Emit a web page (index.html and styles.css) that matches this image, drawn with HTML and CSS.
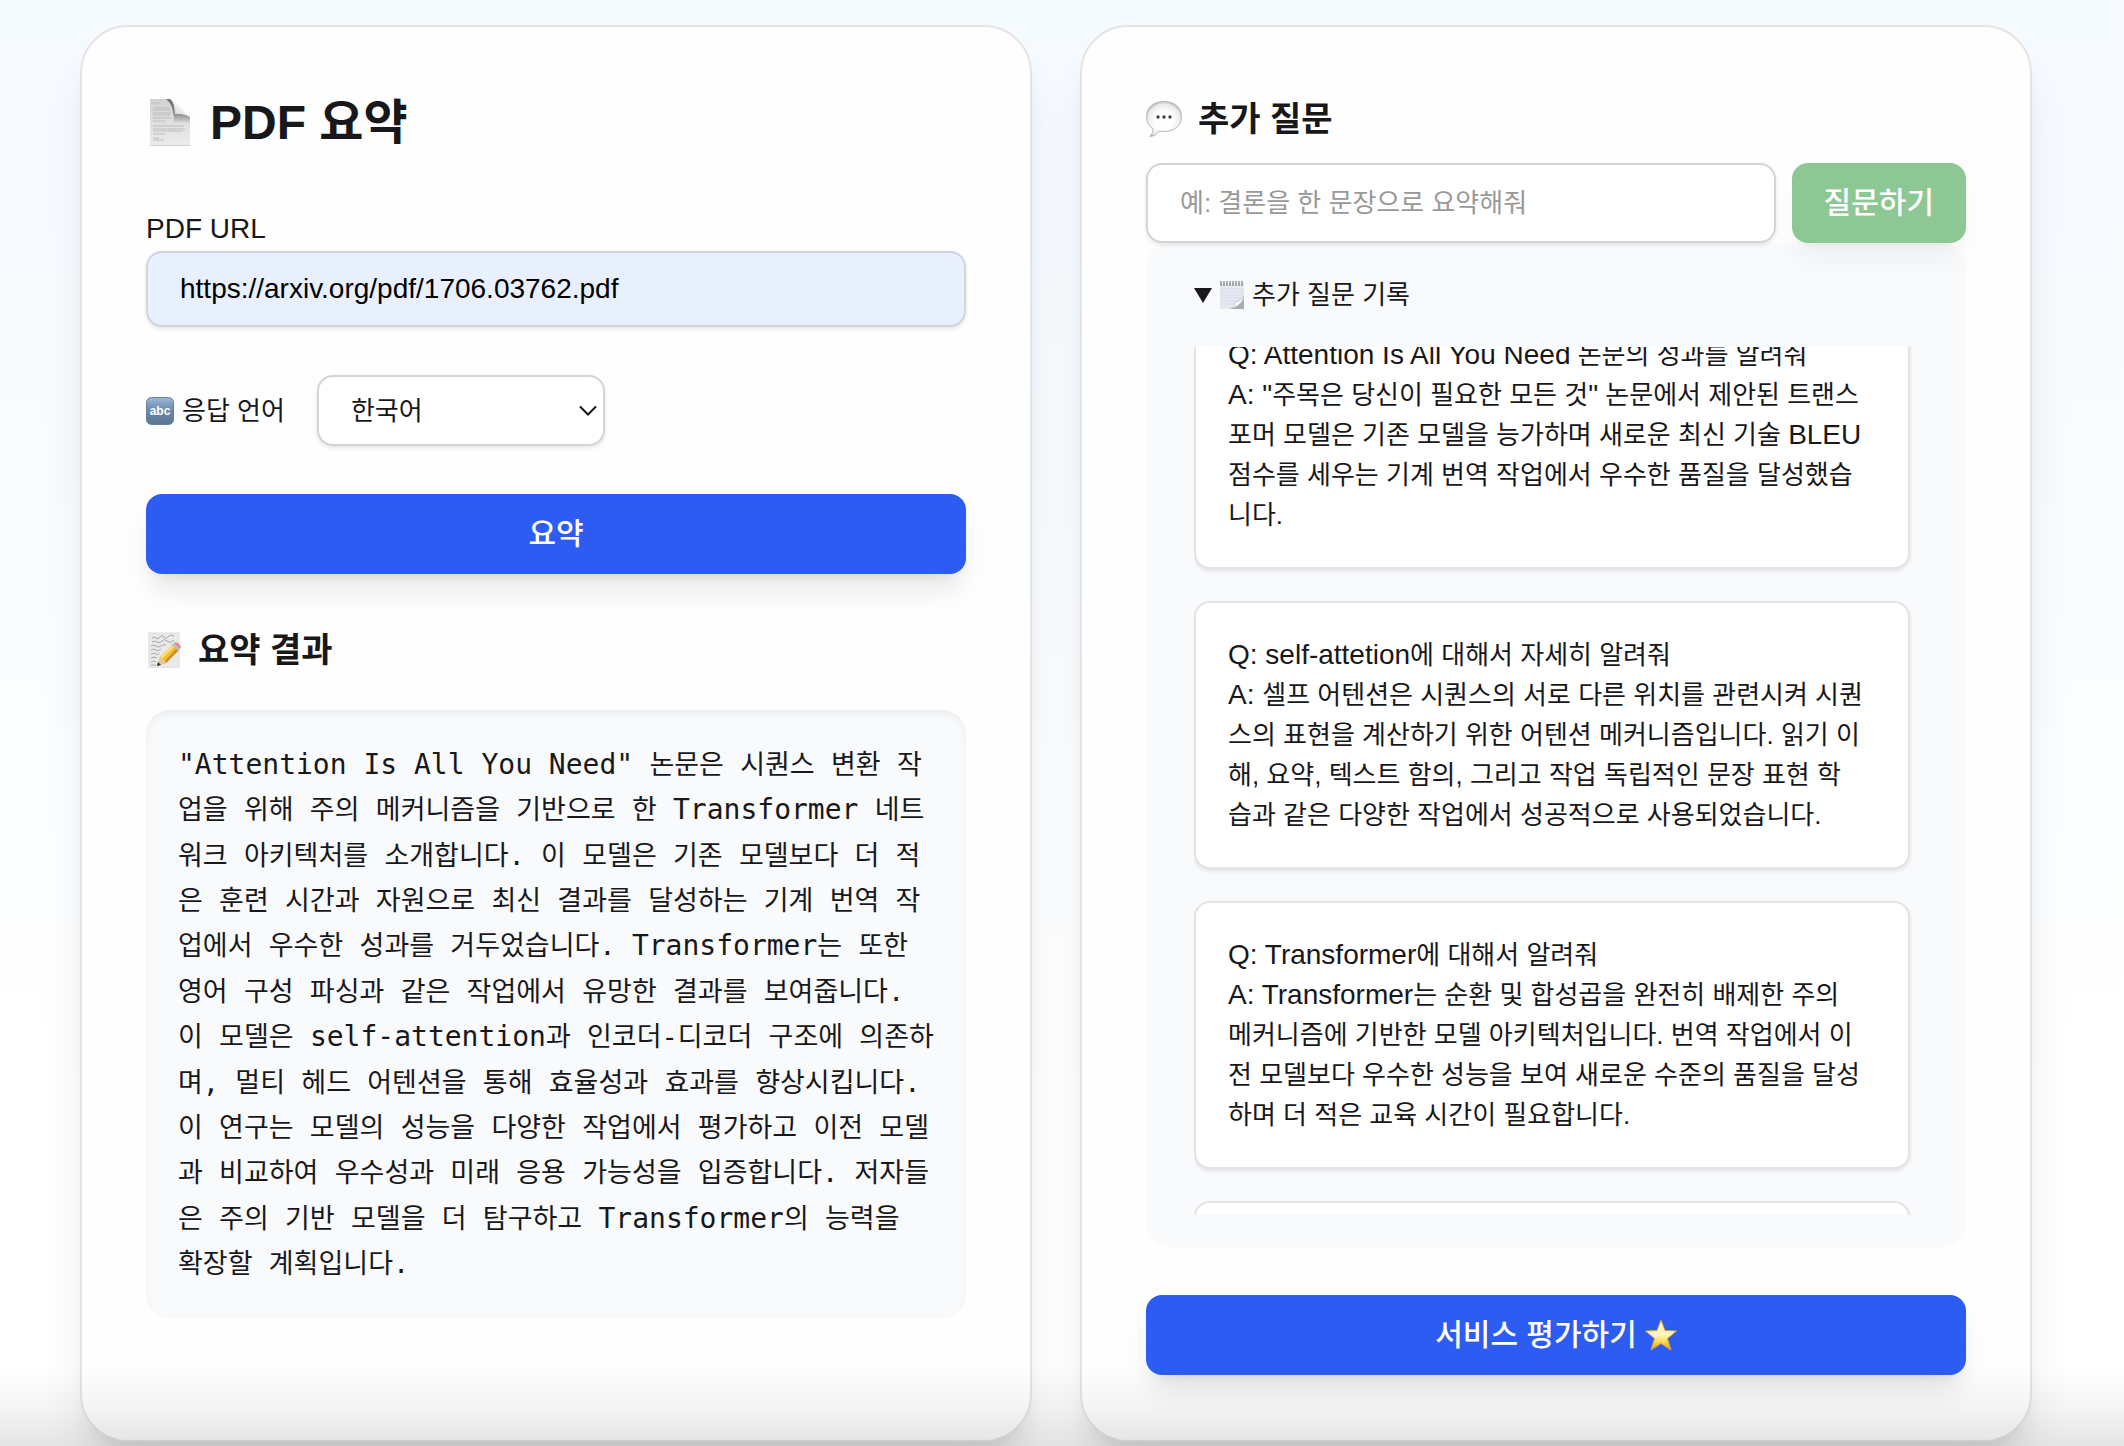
FILE: index.html
```html
<!DOCTYPE html>
<html lang="ko">
<head>
<meta charset="utf-8">
<meta name="viewport" content="width=device-width, initial-scale=1">
<title>PDF 요약</title>
<link rel="stylesheet" href="styles.css">
</head>
<body>
<main class="page">
  <section class="card">
    <h1 class="title">
      <svg class="icon-xl" viewBox="0 0 48 48" aria-hidden="true">
        <defs>
          <linearGradient id="paper" x1="0" y1="0" x2="0" y2="1"><stop offset="0" stop-color="#d2d2d2"/><stop offset="1" stop-color="#ececec"/></linearGradient>
          <linearGradient id="fold" x1="0" y1="1" x2="1" y2="0"><stop offset="0" stop-color="#c4c4c4"/><stop offset=".6" stop-color="#fafafa"/><stop offset="1" stop-color="#dcdcdc"/></linearGradient>
          <linearGradient id="foldShade" x1="0" y1="0" x2="0" y2="1"><stop offset="0" stop-color="#6f6f6f"/><stop offset=".6" stop-color="#8a8a8a"/><stop offset="1" stop-color="#d8d8d8"/></linearGradient>
        </defs>
        <path d="M4 0H24Q29 2 29 14L44 17V47H4Z" fill="url(#paper)"/>
        <path d="M7 4h7M7 9h17M7 11h18M7 14h19M7 16h17M7 19h18M7 22h12M7 27h31M7 30h32M7 32h30M7 35h12M7 39h6M7 41h11" stroke="#bdbdbd" stroke-width="1"/>
        <path d="M20 0H24Q29 2 29 15Q38 14 44 18V24Q35 22 28 24Q28 6 20 0Z" fill="url(#foldShade)"/>
        <path d="M24 0Q32 4 44 18Q38 14 29 15Q29 3 24 0Z" fill="url(#fold)"/>
        <path d="M4 46.500H44" stroke="#d0d0d0"/>
      </svg>
      PDF 요약
    </h1>

    <label class="field-label" for="pdf-url">PDF URL</label>
    <input class="input input-filled" id="pdf-url" type="text" value="https://arxiv.org/pdf/1706.03762.pdf">

    <div class="lang-row">
      <label class="lang-label" for="language">
        <svg class="icon-sm" viewBox="0 0 28 28" aria-hidden="true">
          <defs><linearGradient id="abc" x1="0" y1="0" x2="0" y2="1"><stop offset="0" stop-color="#9db9d6"/><stop offset=".45" stop-color="#6a8cb0"/><stop offset="1" stop-color="#5d7590"/></linearGradient></defs>
          <rect x=".5" y=".5" width="27" height="27" rx="5" fill="url(#abc)" stroke="#66809c"/>
          <text x="14" y="18" class="abc-text">abc</text>
        </svg>
        응답 언어
      </label>
      <span class="select-wrap">
        <select class="select" id="language">
          <option selected>한국어</option>
        </select>
        <svg class="chevron" viewBox="0 0 18 12" aria-hidden="true"><path d="M1 1.500L9 9.500L17 1.500" fill="none" stroke="#18181b" stroke-width="2"/></svg>
      </span>
    </div>

    <button class="button button-primary" type="button">요약</button>

    <h2 class="subtitle subtitle-result">
      <svg class="icon-lg" viewBox="0 0 36 36" aria-hidden="true">
        <rect x="3" y="1" width="30" height="35" fill="#e9e9e9" stroke="#dcdcdc"/>
        <path d="M6 6q2-2 4 0t4-1t4 0t4 0t6-1M6 10q2-2 5 0t5-1t5 0t7-1M5 14q3-2 5 0t5 0t5-1M5 18q3-2 5 0t5-1M5 22q3-2 5 0t3-1M5 26q3-2 6 0M5 30q3-2 5 0M5 33h5" fill="none" stroke="#a8a8a8" stroke-width="1"/>
        <path d="M11 34l3-9L27 12l6 6L20 31Z" fill="#f4bd35"/>
        <path d="M14 25L27 12l2 2L16 27Z" fill="#ffdc70"/>
        <path d="M18 30L31 16l2 2L20 31Z" fill="#cf8b1e"/>
        <path d="M11 34l3-9q4 1 6 6Z" fill="#e6c795"/>
        <path d="M11 34l1-4l3 3Z" fill="#3a3029"/>
        <path d="M26 13l2-2l6 6l-2 2Z" fill="#b9bec4"/>
        <path d="M28 11q2-2 5 1t1 5Z" fill="#e98592"/>
      </svg>
      요약 결과
    </h2>
    <pre class="result"><span lang="en">"Attention Is All You Need"</span> 논문은 시퀀스 변환 작
업을 위해 주의 메커니즘을 기반으로 한 <span lang="en">Transformer</span> 네트
워크 아키텍처를 소개합니다. 이 모델은 기존 모델보다 더 적
은 훈련 시간과 자원으로 최신 결과를 달성하는 기계 번역 작
업에서 우수한 성과를 거두었습니다. <span lang="en">Transformer</span>는 또한
영어 구성 파싱과 같은 작업에서 유망한 결과를 보여줍니다.
이 모델은 <span lang="en">self-attention</span>과 인코더-디코더 구조에 의존하
며, 멀티 헤드 어텐션을 통해 효율성과 효과를 향상시킵니다.
이 연구는 모델의 성능을 다양한 작업에서 평가하고 이전 모델
과 비교하여 우수성과 미래 응용 가능성을 입증합니다. 저자들
은 주의 기반 모델을 더 탐구하고 <span lang="en">Transformer</span>의 능력을
확장할 계획입니다.</pre>
  </section>

  <section class="card">
    <h2 class="subtitle">
      <svg class="icon-lg" viewBox="0 0 36 36" aria-hidden="true">
        <defs><radialGradient id="bubble" cx=".5" cy=".55" r=".55"><stop offset=".5" stop-color="#fdfdfd"/><stop offset=".85" stop-color="#ececec"/><stop offset="1" stop-color="#bdbdbd"/></radialGradient></defs>
        <path d="M18 .5C28 .5 35.500 6 35.500 15.500S28 30.500 18 30.500Q15 30.500 13 30Q10 35 4 35.500Q8 31 7 28Q.5 24 .5 15.500C.5 6 8 .5 18 .5Z" fill="url(#bubble)" stroke="#b9b9b9"/>
        <circle cx="12" cy="16" r="1.700" fill="#444"/><circle cx="18" cy="16" r="1.700" fill="#444"/><circle cx="24" cy="16" r="1.700" fill="#444"/>
      </svg>
      추가 질문
    </h2>
    <form class="ask">
      <input class="input ask-input" type="text" placeholder="예: 결론을 한 문장으로 요약해줘" aria-label="추가 질문">
      <button class="button button-ask" type="button" disabled>질문하기</button>
    </form>

    <details class="history" open>
      <summary class="history-title">
        <svg class="marker" viewBox="0 0 18 15" aria-hidden="true"><path d="M0 0H18L9 15Z" fill="#18181b"/></svg>
        <svg class="icon-sm" viewBox="0 0 28 28" aria-hidden="true">
          <path d="M2 2H26V17L16 28H2Z" fill="#e6eaf0"/>
          <path d="M2 8H26M2 11H26M2 14H26M2 17H24M2 20H19M2 23H17" stroke="#d6dee8" stroke-width="1"/>
          <path d="M12 28Q17 26 17 21Q22 21 26 15V28Z" fill="#a9aeb5"/>
          <path d="M12 28Q17 26 17 21Q22 21 26 15Q25 24 12 28Z" fill="#f7f8fa" stroke="#b7bcc3" stroke-width=".5"/>
          <path d="M3 0v5M6 0v5M9 0v5M12 0v5M15 0v5M18 0v5M21 0v5M24 0v5" stroke="#77797d" stroke-width="1.200"/>
        </svg>
        추가 질문 기록
      </summary>
      <div class="history-list" id="history-list">
        <p class="entry"><span lang="en">Q: Attention Is All You Need</span> 논문의 성과를 알려줘
<span lang="en">A: "</span>주목은 당신이 필요한 모든 것<span lang="en">"</span> 논문에서 제안된 트랜스
포머 모델은 기존 모델을 능가하며 새로운 최신 기술 <span lang="en">BLEU</span>
점수를 세우는 기계 번역 작업에서 우수한 품질을 달성했습
니다.</p>
        <p class="entry"><span lang="en">Q: self-attetion</span>에 대해서 자세히 알려줘
<span lang="en">A: </span>셀프 어텐션은 시퀀스의 서로 다른 위치를 관련시켜 시퀀
스의 표현을 계산하기 위한 어텐션 메커니즘입니다. 읽기 이
해, 요약, 텍스트 함의, 그리고 작업 독립적인 문장 표현 학
습과 같은 다양한 작업에서 성공적으로 사용되었습니다.</p>
        <p class="entry"><span lang="en">Q: Transformer</span>에 대해서 알려줘
<span lang="en">A: Transformer</span>는 순환 및 합성곱을 완전히 배제한 주의
메커니즘에 기반한 모델 아키텍처입니다. 번역 작업에서 이
전 모델보다 우수한 성능을 보여 새로운 수준의 품질을 달성
하며 더 적은 교육 시간이 필요합니다.</p>
        <p class="entry entry-next"></p>
      </div>
    </details>

    <button class="button button-primary" type="button">서비스 평가하기
      <svg class="icon-star" viewBox="0 0 32 32" aria-hidden="true">
        <defs><linearGradient id="star" x1="0" y1="0" x2="0" y2="1"><stop offset="0" stop-color="#fff3b8"/><stop offset=".5" stop-color="#fff6bd"/><stop offset=".75" stop-color="#f8d445"/><stop offset="1" stop-color="#dd9a1c"/></linearGradient></defs>
        <path d="M16 1L20 11.500L31.500 12L22.500 19.500L26 31L16 24.500L6 31L9.500 19.500L.5 12L12 11.500Z" fill="url(#star)" stroke="#d9a33a" stroke-width="1" stroke-linejoin="round"/>
      </svg>
    </button>
  </section>
</main>
<script src="app.js"></script>
</body>
</html>
```
FILE: styles.css
```css
* { box-sizing: border-box; }

body {
  margin: 0;
  color: #18181b;
  font-family: "Liberation Sans", "Noto Sans CJK KR", sans-serif;
  font-size: 26px;
  line-height: 40px;
}

button, input, select { font: inherit; color: inherit; }

svg { display: block; flex: none; }

.page {
  display: grid;
  grid-template-columns: 1fr 1fr;
  gap: 48px;
  align-items: start;
  min-height: 100vh;
  padding: 25px 92px 4px 80px;
  background: linear-gradient(#f5faff, #f8fcff 30%, #ffffff 75%);
}

/* Fade along the bottom edge of the window */
.page::after {
  content: "";
  position: fixed;
  inset: auto 0 0;
  height: 80px;
  background: linear-gradient(rgba(0, 0, 0, 0), rgba(0, 0, 0, 0.04) 50%, rgba(0, 0, 0, 0.1));
  pointer-events: none;
}

.card {
  display: flex;
  flex-direction: column;
  align-self: stretch;
  padding: 64px;
  border: 2px solid #e4e4e7;
  border-radius: 48px;
  background: #fefefe;
  box-shadow: 0 40px 50px -10px rgba(0, 0, 0, 0.1), 0 16px 20px -12px rgba(0, 0, 0, 0.1);
}

.title,
.subtitle {
  display: flex;
  align-items: center;
  gap: 16px;
  margin: 0;
  font-weight: 700;
}

.title { margin-bottom: 52px; font-size: 48px; line-height: 64px; }
.subtitle { margin-bottom: 16px; font-size: 34px; line-height: 56px; }
.subtitle-result { margin: 48px 0 32px; }

.icon-xl { width: 48px; height: 48px; }
.icon-lg { width: 36px; height: 36px; }
.icon-sm { width: 28px; height: 28px; }
.icon-star { width: 32px; height: 32px; }

.field-label { font-size: 28px; line-height: 44px; }

.input,
.select {
  padding: 0 32px;
  border: 2px solid #d4d4d8;
  border-radius: 16px;
  background: #ffffff;
  box-shadow: 0 2px 4px rgba(0, 0, 0, 0.1);
}

.input { width: 100%; height: 76px; }
.input::placeholder { color: #999999; opacity: 1; }
.input-filled { background: #e8effd; border-color: #d0d5dd; color: #000000; font-size: 28px; }

.lang-row { display: flex; align-items: center; gap: 32px; margin: 48px 0; }
.lang-label { display: flex; align-items: center; gap: 8px; }
.abc-text { fill: #ffffff; font-size: 12px; font-weight: 700; text-anchor: middle; }

.select-wrap { position: relative; }
.select { display: block; width: 288px; height: 71px; appearance: none; }
.chevron { position: absolute; top: 30px; right: 8px; width: 18px; height: 12px; pointer-events: none; }

.button {
  display: flex;
  align-items: center;
  justify-content: center;
  gap: 8px;
  height: 80px;
  padding: 0 32px;
  border: 0;
  border-radius: 16px;
  color: #ffffff;
  font-size: 30px;
  font-weight: 500;
  white-space: nowrap;
  box-shadow: 0 20px 30px -6px rgba(0, 0, 0, 0.1), 0 8px 12px -8px rgba(0, 0, 0, 0.1);
}

.button-primary { background: #2c5cf2; }
.button-ask { background: #8dc894; box-shadow: 0 20px 30px -6px rgba(0, 0, 0, 0.05), 0 8px 12px -8px rgba(0, 0, 0, 0.05); }

.result {
  margin: 0;
  padding: 32px;
  border-radius: 24px;
  background: #f9fafc;
  box-shadow: inset 0 4px 8px rgba(0, 0, 0, 0.05);
  font-family: "DejaVu Sans Mono", "Noto Sans CJK KR", monospace;
  font-size: 27px;
  line-height: 1.68;
}

.result :lang(en),
.entry :lang(en) { font-size: 28px; line-height: 1; }

.ask { display: flex; gap: 16px; position: relative; }
.ask-input { flex: 1; min-width: 0; height: 80px; }

.history {
  margin-bottom: 48px;
  padding: 32px 48px;
  border-radius: 24px;
  background: #f9fafc;
}

.history-title {
  display: flex;
  align-items: center;
  gap: 6px;
  margin-bottom: 32px;
  list-style: none;
}

.marker { width: 18px; height: 15px; }

.history-list {
  display: flex;
  flex-direction: column;
  gap: 32px;
  max-height: 60vh;
  padding-right: 8px;
  overflow-y: auto;
  scrollbar-width: none;
}

.entry {
  flex: none;
  margin: 0;
  padding: 32px;
  border: 2px solid #e4e4e7;
  border-radius: 16px;
  background: #ffffff;
  box-shadow: 0 2px 4px rgba(0, 0, 0, 0.1);
  white-space: pre;
}

.entry-next { height: 268px; }
```
FILE: app.js
```js
// Open the history a little below its top
document.getElementById("history-list").scrollTop = 46;
```
